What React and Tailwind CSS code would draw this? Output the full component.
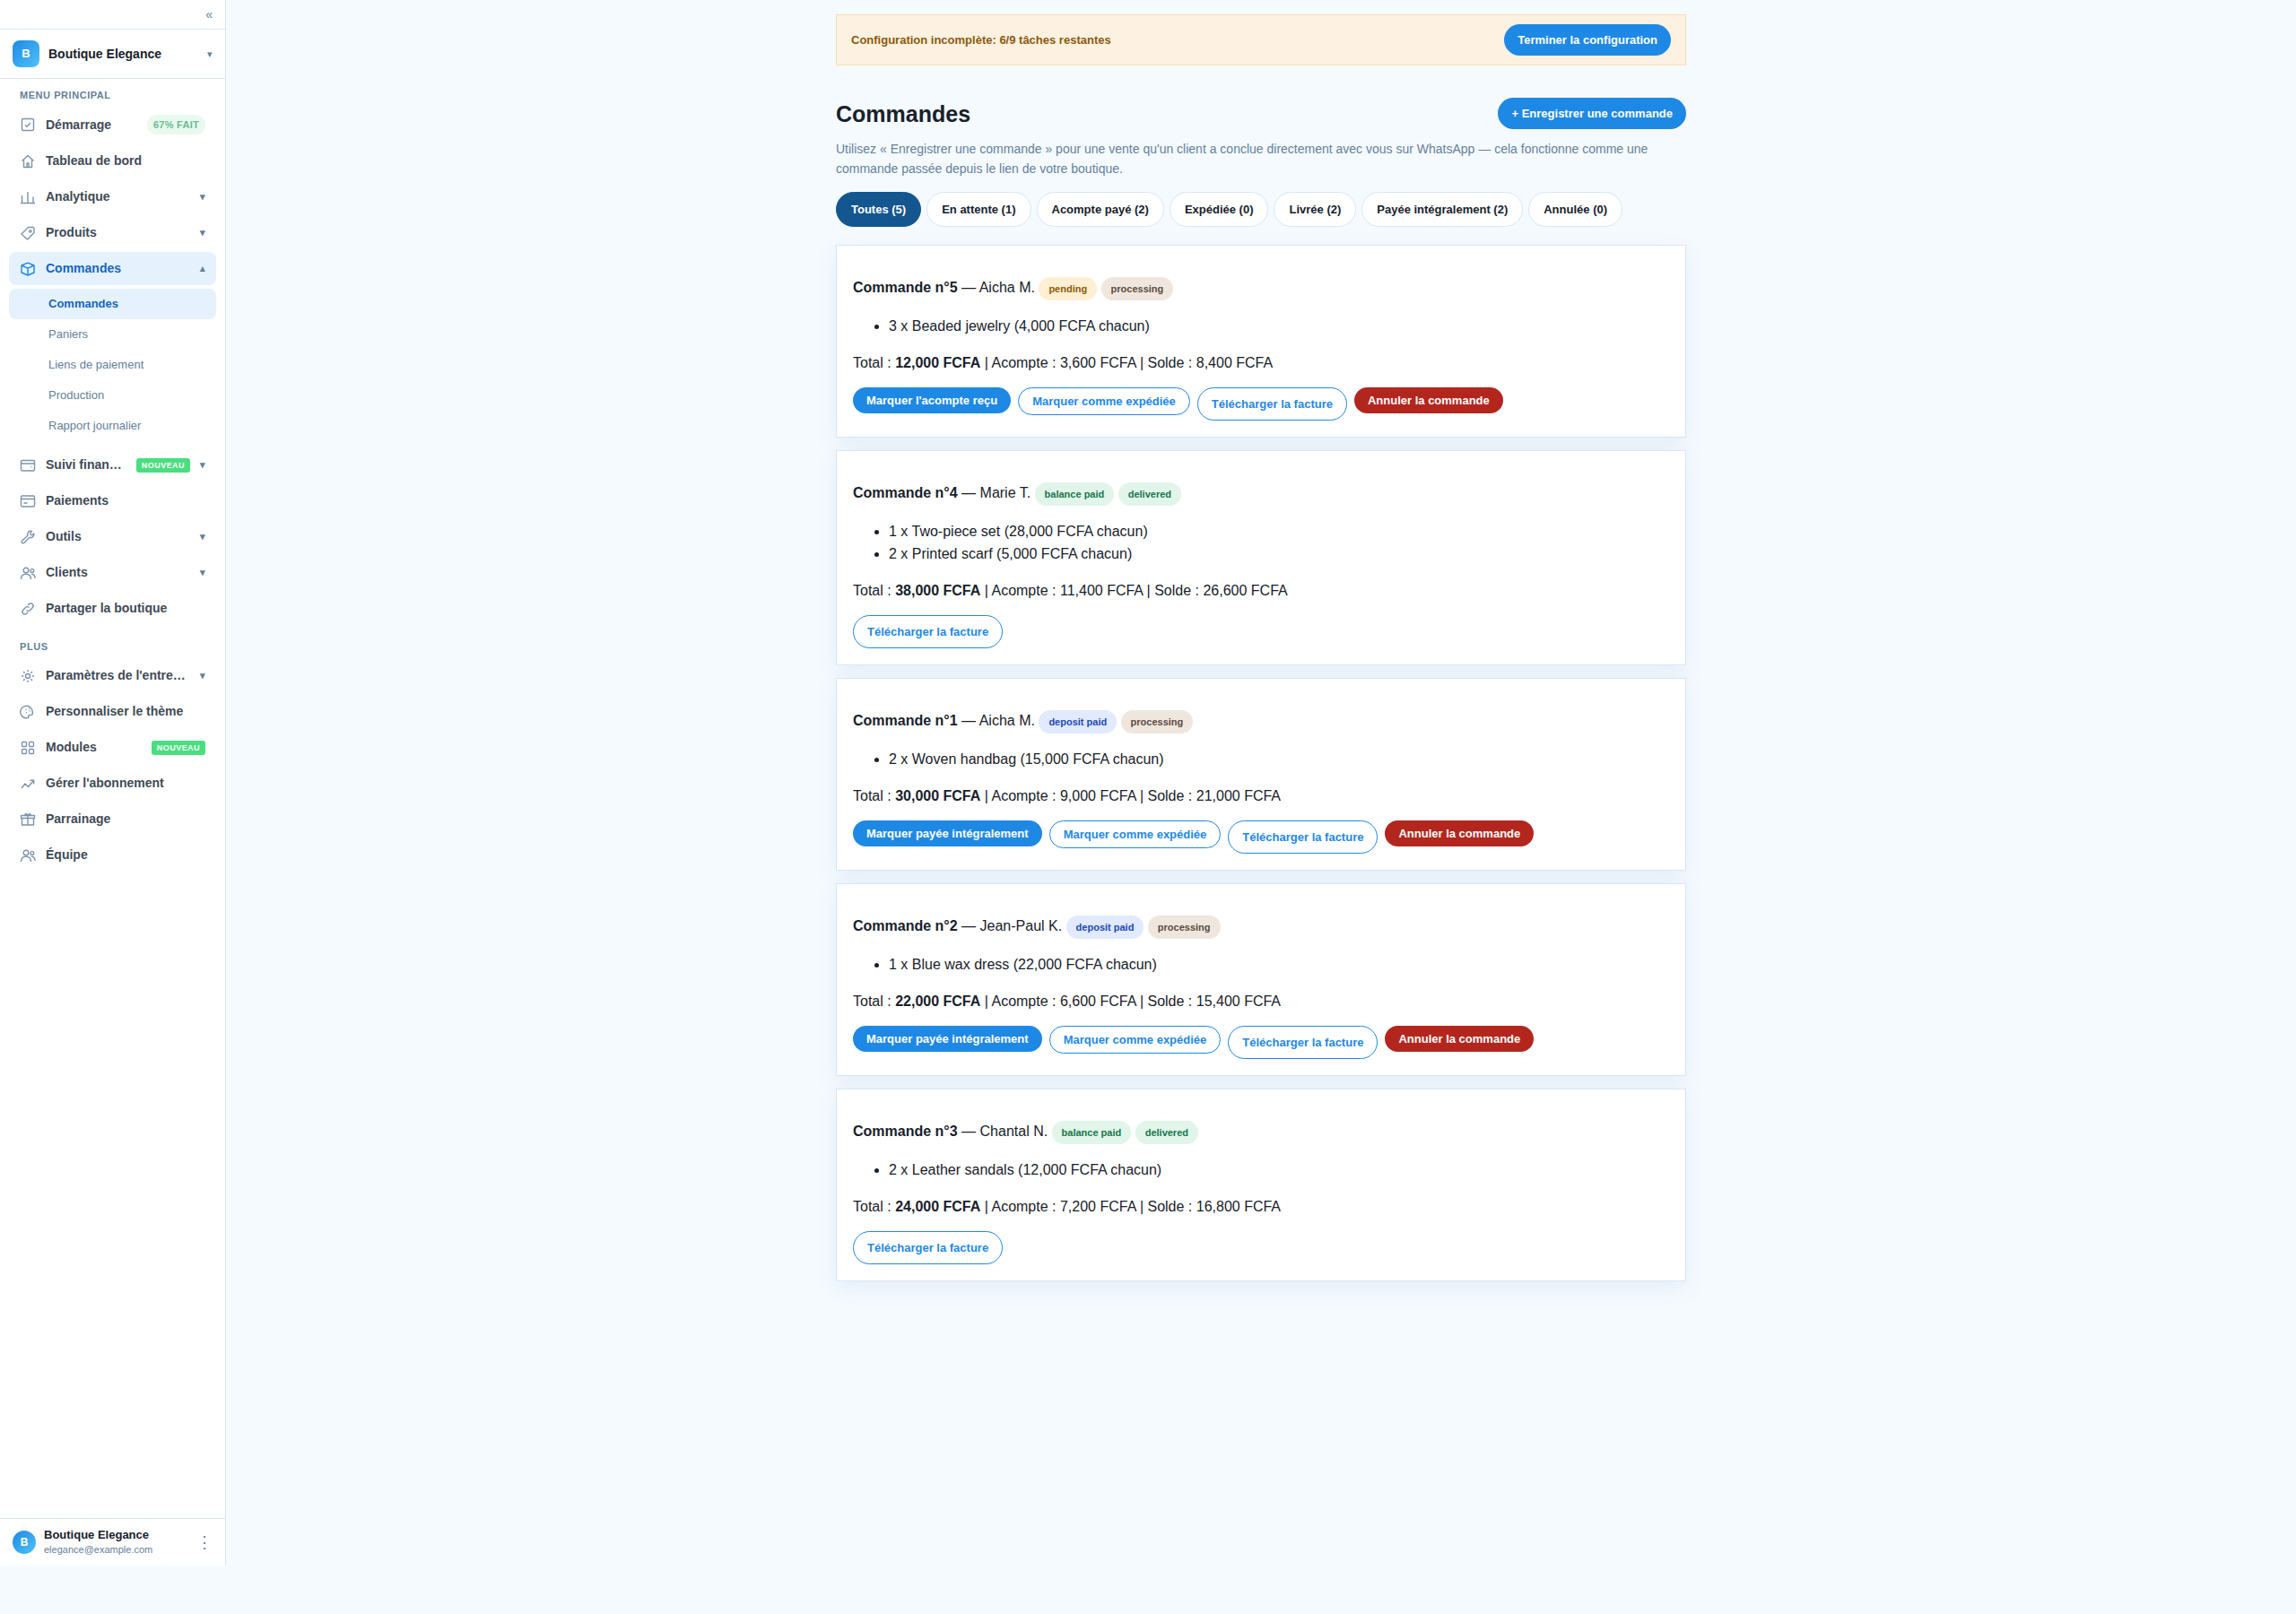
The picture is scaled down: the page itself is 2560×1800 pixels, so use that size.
const GROUPS = [
  {
    title: "Menu principal",
    items: [
      { label: "Démarrage", icon: "check", progress: "67% fait" },
      { label: "Tableau de bord", icon: "home" },
      { label: "Analytique", icon: "chart", caret: true },
      { label: "Produits", icon: "tag", caret: true },
      {
        label: "Commandes",
        icon: "box",
        caret: true,
        open: true,
        children: ["Commandes", "Paniers", "Liens de paiement", "Production", "Rapport journalier"],
      },
      { label: "Suivi finan…", icon: "wallet", isNew: true, caret: true },
      { label: "Paiements", icon: "card" },
      { label: "Outils", icon: "wrench", caret: true },
      { label: "Clients", icon: "users", caret: true },
      { label: "Partager la boutique", icon: "link" },
    ],
  },
  {
    title: "Plus",
    items: [
      { label: "Paramètres de l'entre…", icon: "gear", caret: true },
      { label: "Personnaliser le thème", icon: "palette" },
      { label: "Modules", icon: "grid", isNew: true },
      { label: "Gérer l'abonnement", icon: "trend" },
      { label: "Parrainage", icon: "gift" },
      { label: "Équipe", icon: "users" },
    ],
  },
];

const FILTERS = [
  "Toutes (5)",
  "En attente (1)",
  "Acompte payé (2)",
  "Expédiée (0)",
  "Livrée (2)",
  "Payée intégralement (2)",
  "Annulée (0)",
];

const ORDERS = [
  {
    id: 5,
    customer: "Aicha M.",
    badges: ["pending", "processing"],
    lines: ["3 x Beaded jewelry (4,000 FCFA chacun)"],
    total: "12,000",
    deposit: "3,600",
    balance: "8,400",
    next: "Marquer l'acompte reçu",
  },
  {
    id: 4,
    customer: "Marie T.",
    badges: ["balance paid", "delivered"],
    lines: ["1 x Two-piece set (28,000 FCFA chacun)", "2 x Printed scarf (5,000 FCFA chacun)"],
    total: "38,000",
    deposit: "11,400",
    balance: "26,600",
  },
  {
    id: 1,
    customer: "Aicha M.",
    badges: ["deposit paid", "processing"],
    lines: ["2 x Woven handbag (15,000 FCFA chacun)"],
    total: "30,000",
    deposit: "9,000",
    balance: "21,000",
    next: "Marquer payée intégralement",
  },
  {
    id: 2,
    customer: "Jean-Paul K.",
    badges: ["deposit paid", "processing"],
    lines: ["1 x Blue wax dress (22,000 FCFA chacun)"],
    total: "22,000",
    deposit: "6,600",
    balance: "15,400",
    next: "Marquer payée intégralement",
  },
  {
    id: 3,
    customer: "Chantal N.",
    badges: ["balance paid", "delivered"],
    lines: ["2 x Leather sandals (12,000 FCFA chacun)"],
    total: "24,000",
    deposit: "7,200",
    balance: "16,800",
  },
];

const BADGE_COLORS = {
  pending: "bg-[#ffefd3] text-[#8a5a0b]",
  processing: "bg-[#efe6de] text-[#5d4a41]",
  "balance paid": "bg-[#e1f5ea] text-[#15774a]",
  delivered: "bg-[#e1f5ea] text-[#15774a]",
  "deposit paid": "bg-[#e1eafe] text-[#2148b8]",
};

const ICONS = {
  check: (
    <>
      <rect x="2.5" y="2.5" width="13" height="13" rx="1.5" />
      <path d="M6 9.2l2 2 4-4.2" />
    </>
  ),
  home: (
    <>
      <path d="M2.5 8.5L9 2.500l6.500 6" />
      <path d="M4.500 7.500v8h9v-8" />
      <path d="M8 15.500V11h2v4.500" />
    </>
  ),
  chart: <path d="M1 15.500h16M2.500 15.500V7M9 15.500V3M15 15.500V8.500" />,
  tag: (
    <>
      <path d="M9.500 2.500h5a1.500 1.500 0 0 1 1.500 1.500v4.500l-7.500 7.500L2 10z" />
      <circle cx="11.8" cy="6.8" r="1.2" />
    </>
  ),
  box: (
    <>
      <path d="M9 2.200L16 5v8l-7 3-7-3V5z" />
      <path d="M2 5l7 3.200L16 5M9 8.200V16" />
    </>
  ),
  wallet: (
    <>
      <rect x="1.5" y="3.5" width="15" height="11.5" rx="1.5" />
      <path d="M1.500 7h15M12.500 10.500h1" />
    </>
  ),
  card: (
    <>
      <rect x="1.5" y="3" width="15" height="12" rx="1.5" />
      <path d="M1.500 6.500h15M4.500 11h4" />
    </>
  ),
  wrench: (
    <path d="M13.500 2.500a3.600 3.600 0 0 0-4.600 4.700L2.700 12.900a1.600 1.600 0 0 0 2.300 2.400l6-6a3.600 3.600 0 0 0 4.800-4.300l-2.200 1.700-1.500-.5-.4-1.600z" />
  ),
  users: (
    <>
      <circle cx="7" cy="6" r="2.8" />
      <path d="M1.500 16c0-3.500 2.200-5.800 5.500-5.800s5.500 2.300 5.500 5.800" />
      <circle cx="13.8" cy="6.500" r="1.9" />
      <path d="M13 10.200c2.400 0 4 1.800 4 4.800" />
    </>
  ),
  link: (
    <>
      <path d="M7.500 10.500a2.800 2.800 0 0 0 4 0l2.700-2.700a2.800 2.800 0 0 0-4-4L9 5" />
      <path d="M10.500 7.500a2.800 2.800 0 0 0-4 0l-2.700 2.700a2.800 2.800 0 0 0 4 4L9 13" />
    </>
  ),
  gear: (
    <>
      <circle cx="9" cy="9" r="2.5" />
      <path d="M9 2v2.300M9 13.700V16M2 9h2.300M13.700 9H16M4 4l1.700 1.700M12.300 12.300L14 14M4 14l1.700-1.700M12.300 5.700L14 4" />
    </>
  ),
  palette: (
    <>
      <path d="M8 15.800A6.800 6.800 0 1 1 14.300 9v2c0 .9-.5 1.400-1.400 1.400H11c-1 0-1.400.7-1.100 1.500.4 1.100-.6 1.900-1.900 1.900z" />
      <path d="M6.500 6.200h1M10 5.500h1M10.800 8h1M6.800 9.800h1" />
    </>
  ),
  grid: (
    <>
      <rect x="2.5" y="2.5" width="5" height="5" rx="1" />
      <rect x="10.5" y="2.5" width="5" height="5" rx="1" />
      <rect x="2.5" y="10.5" width="5" height="5" rx="1" />
      <rect x="10.5" y="10.5" width="5" height="5" rx="1" />
    </>
  ),
  trend: (
    <>
      <path d="M2 14l4-5 3.500 3.500 6-7" />
      <path d="M11.500 5.200h4.200v4.200" />
    </>
  ),
  gift: (
    <>
      <path d="M1.500 4.500h15v3h-15zM2.500 7.500V15h13V7.500M9 4.500V15" />
      <path d="M9 4.500C7.500 4.500 5.500 4 6 3.100S8.500 2.800 9 4.500c.5-1.700 2.500-2.300 3-1.400s-1.500 1.400-3 1.400z" />
    </>
  ),
};

function Icon({ name, active }) {
  return (
    <svg
      viewBox="0 0 18 18"
      className={active ? "size-[18px] shrink-0 text-[#1e88e5]" : "size-[18px] shrink-0 text-[#7d94ac]"}
      fill="none"
      stroke="currentColor"
      strokeWidth="1.4"
      strokeLinejoin="round"
      aria-hidden="true"
    >
      {ICONS[name]}
    </svg>
  );
}

function NavItem({ item }) {
  return (
    <li>
      <a
        href="#"
        className={`flex items-center gap-[11px] rounded-lg px-3 py-2 text-sm leading-[21px] font-bold ${
          item.open ? "bg-[#e5f2fd] text-[#1565c0]" : "text-[#3f4a56]"
        }`}
      >
        <Icon name={item.icon} active={item.open} />
        <span className="min-w-0 flex-1 whitespace-nowrap">{item.label}</span>
        {item.progress && (
          <span className="rounded-full bg-[#e9f9f0] px-[7px] text-[11px] leading-[22px] tracking-wide text-[#68bd93] uppercase">
            {item.progress}
          </span>
        )}
        {item.isNew && (
          <span className="rounded-[3px] bg-[#4ade80] px-[6px] text-[9px] leading-4 tracking-wider text-white uppercase">
            Nouveau
          </span>
        )}
        {item.caret && <span className="text-[11px] text-[#64809b]">{item.open ? "▴" : "▾"}</span>}
      </a>
      {item.children && (
        <ul className="mt-1 mb-[5px]">
          {item.children.map((child, i) => (
            <li key={child}>
              <a
                href="#"
                className={`flex h-[34px] items-center rounded-lg pl-11 text-[13px] ${
                  i === 0 ? "bg-[#e5f2fd] font-bold text-[#1565c0]" : "text-[#64809b]"
                }`}
              >
                {child}
              </a>
            </li>
          ))}
        </ul>
      )}
    </li>
  );
}

function Sidebar() {
  return (
    <aside className="mb-[54px] flex w-[252px] shrink-0 flex-col border-r border-[#d6e4f2] bg-white">
      <div className="flex h-[33px] items-center justify-end border-b border-[#d6e7f5] pr-[14px]">
        <button type="button" aria-label="Réduire le menu" className="text-sm text-[#64809b]">
          «
        </button>
      </div>
      <button type="button" className="flex h-[55px] items-center gap-[10px] border-b border-[#d6e7f5] px-[14px] text-left">
        <span className="flex size-[30px] items-center justify-center rounded-lg bg-linear-135 from-[#1e88e5] to-[#4fc3f7] text-[13px] font-bold text-white">
          B
        </span>
        <span className="flex-1 text-sm font-bold">Boutique Elegance</span>
        <span className="text-[11px] text-[#64809b]">▾</span>
      </button>
      <nav className="flex-1 px-[10px] pt-[10px]">
        {GROUPS.map((group) => (
          <section key={group.title} className="mb-4">
            <h2 className="px-3 text-[11px] leading-[16px] font-bold tracking-wider text-[#64809b] uppercase">
              {group.title}
            </h2>
            <ul className="mt-[6px] flex flex-col gap-[3px]">
              {group.items.map((item) => (
                <NavItem key={item.label} item={item} />
              ))}
            </ul>
          </section>
        ))}
      </nav>
      <div className="flex h-[53px] items-center gap-[9px] border-t border-[#d6e4f2] px-[14px]">
        <span className="flex size-[26px] items-center justify-center rounded-full bg-linear-135 from-[#1e88e5] to-[#4fc3f7] text-xs font-bold text-white">
          B
        </span>
        <div className="flex-1">
          <p className="text-[13px] leading-4 font-bold">Boutique Elegance</p>
          <p className="text-[11px] leading-4 text-[#64809b]">elegance@example.com</p>
        </div>
        <button type="button" aria-label="Options du compte" className="text-lg text-[#64809b]">
          ⋮
        </button>
      </div>
    </aside>
  );
}

function OrderCard({ order }) {
  return (
    <article className="border border-[#d6e7f7] bg-white p-[18px] leading-[25px] shadow-[0_8px_24px_rgba(20,86,143,0.08)]">
      <p className="my-4">
        <strong>Commande n°{order.id}</strong> — {order.customer}{" "}
        {order.badges.map((badge, i) => (
          <span key={badge}>
            {i > 0 && " "}
            <span
              className={`inline-block rounded-full px-[11px] py-1 text-[11px] leading-[18px] font-bold ${BADGE_COLORS[badge]}`}
            >
              {badge}
            </span>
          </span>
        ))}
      </p>
      <ul className="my-4 list-disc pl-10">
        {order.lines.map((line) => (
          <li key={line}>{line}</li>
        ))}
      </ul>
      <p className="mt-4 mb-[15px]">
        Total : <strong>{order.total} FCFA</strong> | Acompte : {order.deposit} FCFA | Solde : {order.balance} FCFA
      </p>
      <div className="flex flex-wrap items-start gap-2 text-[13px] font-bold">
        {order.next && (
          <>
            <button type="button" className="rounded-full bg-[#1e88e5] px-[15px] py-[7px] leading-[15px] text-white">
              {order.next}
            </button>
            <button
              type="button"
              className="rounded-full border border-[#1e88e5] px-[15px] py-[7px] leading-[15px] text-[#1e88e5]"
            >
              Marquer comme expédiée
            </button>
          </>
        )}
        <a href="#" className="rounded-full border border-[#1e88e5] px-[15px] py-[7px] leading-[21px] text-[#1e88e5]">
          Télécharger la facture
        </a>
        {order.next && (
          <button type="button" className="rounded-full bg-[#b3261e] px-[15px] py-[7px] leading-[15px] text-white">
            Annuler la commande
          </button>
        )}
      </div>
    </article>
  );
}

export default function App() {
  return (
    <div className="flex min-h-screen bg-[#f5faff] font-['Liberation_Sans',Arial,sans-serif] text-[#17212b]">
      <Sidebar />
      <main className="flex-1">
        <div className="mx-auto max-w-[980px] p-4">
          <div className="flex items-center justify-between border border-[#f8dfb4] bg-[#fdf1e2] px-4 py-[10px] text-[13px] font-bold">
            <span className="text-[#8a5a0b]">Configuration incomplète: 6/9 tâches restantes</span>
            <a href="#" className="rounded-full bg-[#1e88e5] px-[15px] py-[7px] leading-[21px] text-white">
              Terminer la configuration
            </a>
          </div>

          <div className="mt-9 flex items-center justify-between">
            <h1 className="text-[25px] leading-8 font-bold">Commandes</h1>
            <a
              href="#"
              className="rounded-full bg-[#1e88e5] px-[15px] py-[7px] text-[13px] leading-[21px] font-bold text-white"
            >
              + Enregistrer une commande
            </a>
          </div>
          <p className="mt-[11px] text-sm leading-[22px] text-[#64809b]">
            Utilisez « Enregistrer une commande » pour une vente qu'un client a conclue directement avec vous sur
            WhatsApp — cela fonctionne comme une commande passée depuis le lien de votre boutique.
          </p>

          <div className="mt-[15px] flex flex-wrap gap-[6px]">
            {FILTERS.map((filter, i) => (
              <a
                key={filter}
                href="#"
                className={`rounded-full border px-4 py-2 text-[13px] leading-[21px] font-bold ${
                  i === 0 ? "border-[#14568f] bg-[#14568f] text-white" : "border-[#d6e7f7] bg-white"
                }`}
              >
                {filter}
              </a>
            ))}
          </div>

          <div className="mt-5 flex flex-col gap-[14px]">
            {ORDERS.map((order) => (
              <OrderCard key={order.id} order={order} />
            ))}
          </div>
        </div>
      </main>
    </div>
  );
}
